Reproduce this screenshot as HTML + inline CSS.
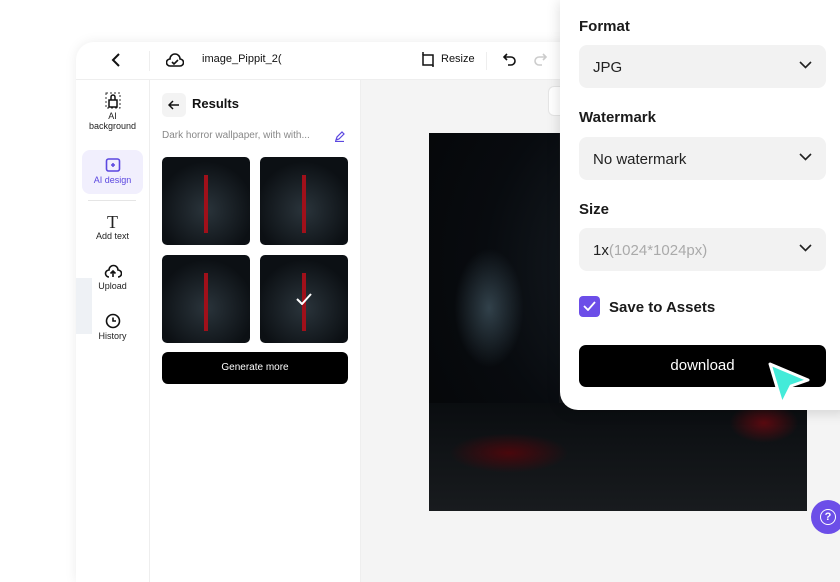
<!DOCTYPE html><html><head><style>
*{box-sizing:border-box;margin:0;padding:0}
body{width:840px;height:560px;overflow:hidden;background:#fff;font-family:"Liberation Sans",sans-serif;position:relative;color:#111}
.app{position:absolute;left:76px;top:42px;width:800px;height:540px;background:#fff;border-radius:18px 0 0 0;box-shadow:0 0 12px rgba(0,0,0,.08);overflow:hidden}
.hdr{position:absolute;left:0;top:0;right:0;height:38px;border-bottom:1px solid #eee;font-size:11px}
.side{position:absolute;left:0;top:38px;width:74px;bottom:0;border-right:1px solid #eee}
.si{position:absolute;left:6px;width:61px;text-align:center;font-size:9px;color:#222}
.panel{position:absolute;left:74px;top:38px;width:211px;bottom:0;border-right:1px solid #eee}
.canvas{position:absolute;left:285px;top:38px;right:0;bottom:0;background:#f4f4f4}
.th{position:absolute;width:88px;height:88px;border-radius:5px;background:radial-gradient(circle at 50% 60%,#2a343b,#0c1014 70%);overflow:hidden}
.th:after{content:"";position:absolute;left:42px;top:18px;width:4px;height:58px;background:#a0101a}
.pop{position:absolute;left:560px;top:0;width:290px;height:410px;background:#fff;border-radius:0 0 0 18px;box-shadow:0 2px 14px rgba(0,0,0,.15)}
.lbl{position:absolute;left:19px;font-size:15px;font-weight:bold;color:#1a1a1a}
.sel{position:absolute;left:19px;width:247px;height:43px;background:#f2f2f2;border-radius:8px;font-size:15px;padding:14px 14px;color:#222}
.sel svg{position:absolute;right:14px;top:16px}
</style></head><body>
<div class="app">
 <div class="hdr">
  <svg style="position:absolute;left:35px;top:11px" width="10" height="14" viewBox="0 0 10 14"><path d="M8 1L2 7l6 6" stroke="#111" stroke-width="2" fill="none"/></svg>
  <div style="position:absolute;left:73px;top:9px;width:1px;height:20px;background:#eee"></div>
  <svg style="position:absolute;left:90px;top:10px" width="18" height="16" viewBox="0 0 18 16"><path d="M4 14a3.5 3.5 0 0 1 0-7a5 5 0 0 1 10 0a3.5 3.5 0 0 1 0 7z" stroke="#111" stroke-width="1.6" fill="none"/><path d="M6 10l2 2 4-4" stroke="#111" stroke-width="1.6" fill="none"/></svg>
  <div style="position:absolute;left:126px;top:11px">image_Pippit_2(</div>
  <svg style="position:absolute;left:345px;top:10px" width="15" height="15" viewBox="0 0 15 15"><rect x="2" y="3" width="10" height="10" stroke="#111" stroke-width="1.5" fill="none"/><path d="M2 0v3M12 13v2" stroke="#111" stroke-width="1.5"/></svg>
  <div style="position:absolute;left:365px;top:11px">Resize</div>
  <div style="position:absolute;left:410px;top:10px;width:1px;height:18px;background:#eee"></div>
  <svg style="position:absolute;left:427px;top:10px" width="14" height="14" viewBox="0 0 14 14"><path d="M4 2L1 5l3 3M1 5h7a4 4 0 0 1 0 8H5" stroke="#111" stroke-width="1.6" fill="none"/></svg>
  <svg style="position:absolute;left:457px;top:10px" width="14" height="14" viewBox="0 0 14 14"><path d="M10 2l3 3-3 3M13 5H6a4 4 0 0 0 0 8h3" stroke="#ccc" stroke-width="1.6" fill="none"/></svg>
 </div>
 <div class="side">
  <div style="position:absolute;left:0;top:198px;width:16px;height:56px;background:#eef1f5"></div>
  <div class="si" style="top:12px"><svg width="16" height="17" viewBox="0 0 16 17"><rect x="1" y="1" width="14" height="15" stroke="#333" stroke-dasharray="2 2" fill="none"/><path d="M4 15V8h8v7zM6 8V5a2 2 0 0 1 4 0v3" stroke="#111" stroke-width="1.5" fill="none"/></svg><br>AI<br>background</div>
  <div class="si" style="top:70px;height:44px;background:#f1effd;border-radius:8px;color:#5b47e0;padding-top:7px"><svg width="16" height="16" viewBox="0 0 16 16"><rect x="1.5" y="2" width="13" height="12" rx="2" stroke="#5b47e0" stroke-width="1.6" fill="none"/><path d="M6 8h4M8 6v4" stroke="#5b47e0" stroke-width="1.5"/></svg><br>AI design</div>
  <div style="position:absolute;left:12px;top:120px;width:48px;height:1px;background:#e5e5e5"></div>
  <div class="si" style="top:133px"><div style="font-family:'Liberation Serif',serif;font-size:18px;line-height:18px">T</div>Add text</div>
  <div class="si" style="top:183px"><svg width="18" height="16" viewBox="0 0 18 16"><path d="M5 14a3.5 3.5 0 0 1 0-7a4.5 4.5 0 0 1 9 0a3.5 3.5 0 0 1 0 7M9 14V8M6.5 10.5L9 8l2.5 2.5" stroke="#111" stroke-width="1.6" fill="none"/></svg><br>Upload</div>
  <div class="si" style="top:233px"><svg width="16" height="16" viewBox="0 0 16 16"><circle cx="8" cy="8" r="6.5" stroke="#111" stroke-width="1.6" fill="none"/><path d="M8 4.5V8h3" stroke="#111" stroke-width="1.6" fill="none"/></svg><br>History</div>
 </div>
 <div class="panel">
  <div style="position:absolute;left:12px;top:13px;width:24px;height:24px;background:#f3f3f3;border-radius:5px"><svg style="margin:6px" width="12" height="12" viewBox="0 0 12 12"><path d="M11 6H1M5 2L1 6l4 4" stroke="#111" stroke-width="1.5" fill="none"/></svg></div>
  <div style="position:absolute;left:42px;top:16px;font-size:13px;font-weight:bold">Results</div>
  <div style="position:absolute;left:12px;top:50px;font-size:10px;color:#888">Dark horror wallpaper, with with...</div>
  <svg style="position:absolute;left:184px;top:51px" width="11" height="11" viewBox="0 0 11 11"><path d="M2 9l1-3 5-5 2 2-5 5zM1 10.5h9" stroke="#5b47e0" stroke-width="1.2" fill="none"/></svg>
  <div class="th" style="left:12px;top:77px"></div>
  <div class="th" style="left:110px;top:77px"></div>
  <div class="th" style="left:12px;top:175px"></div>
  <div class="th" style="left:110px;top:175px"><svg style="position:absolute;left:36px;top:38px;z-index:2" width="16" height="12" viewBox="0 0 16 12"><path d="M1 6l5 5L15 1" stroke="#fff" stroke-width="2" fill="none"/></svg></div>
  <div style="position:absolute;left:12px;top:272px;width:186px;height:32px;background:#000;border-radius:6px;color:#fff;font-size:10px;text-align:center;line-height:32px">Generate more</div>
 </div>
 <div class="canvas">
  <div style="position:absolute;left:187px;top:6px;width:20px;height:30px;background:#fff;border-radius:6px;border:1px solid #e5e5e5"></div>
  <div style="position:absolute;left:68px;top:53px;width:378px;height:378px;background:radial-gradient(ellipse at 65% 35%,#1c242b,#080b0f 55%,#040506);overflow:hidden">
   <div style="position:absolute;left:25px;top:115px;width:70px;height:120px;background:radial-gradient(ellipse,#4d6572,transparent 70%);opacity:.6"></div>
   <div style="position:absolute;left:130px;top:0;width:5px;height:378px;background:#1a1d20;opacity:.6"></div>
   <div style="position:absolute;left:0;top:270px;width:378px;height:108px;background:linear-gradient(#0a0d10,#181b1e)"></div>
   <div style="position:absolute;left:300px;top:270px;width:70px;height:40px;background:radial-gradient(ellipse,#5a0a10,transparent 70%)"></div>
   <div style="position:absolute;left:20px;top:300px;width:120px;height:40px;background:radial-gradient(ellipse,#4a070c,transparent 70%)"></div>
  </div>
 </div>
</div>
<div style="position:absolute;left:811px;top:500px;width:34px;height:34px;border-radius:50%;background:#6c4ee8"><div style="position:absolute;left:9px;top:9px;width:16px;height:16px;border:1.6px solid #fff;border-radius:50%;color:#fff;font-size:11px;font-weight:bold;text-align:center;line-height:14px">?</div></div>
<div class="pop">
 <div class="lbl" style="top:18px">Format</div>
 <div class="sel" style="top:45px">JPG<svg width="13" height="8" viewBox="0 0 13 8"><path d="M1 1l5.5 5.5L12 1" stroke="#222" stroke-width="1.6" fill="none"/></svg></div>
 <div class="lbl" style="top:109px">Watermark</div>
 <div class="sel" style="top:137px">No watermark<svg width="13" height="8" viewBox="0 0 13 8"><path d="M1 1l5.5 5.5L12 1" stroke="#222" stroke-width="1.6" fill="none"/></svg></div>
 <div class="lbl" style="top:201px">Size</div>
 <div class="sel" style="top:228px">1x<span style="color:#aaa">(1024*1024px)</span><svg width="13" height="8" viewBox="0 0 13 8"><path d="M1 1l5.5 5.5L12 1" stroke="#222" stroke-width="1.6" fill="none"/></svg></div>
 <div style="position:absolute;left:19px;top:296px;width:21px;height:21px;background:#6c4ee8;border-radius:4px"><svg style="margin:5px 4px" width="13" height="10" viewBox="0 0 13 10"><path d="M1 5l4 4 7-8" stroke="#fff" stroke-width="1.8" fill="none"/></svg></div>
 <div style="position:absolute;left:49px;top:299px;font-size:15px;font-weight:bold;color:#1a1a1a">Save to Assets</div>
 <div style="position:absolute;left:19px;top:345px;width:247px;height:42px;background:#000;border-radius:7px;color:#fff;font-size:15px;text-align:center;line-height:42px">download</div>
</div>
<svg style="position:absolute;left:764px;top:358px" width="50" height="52" viewBox="0 0 50 52"><path d="M6 6L44 22L27 28L18 46Z" fill="#44ebd9" stroke="#fff" stroke-width="3" stroke-linejoin="round"/></svg>
</body></html>
